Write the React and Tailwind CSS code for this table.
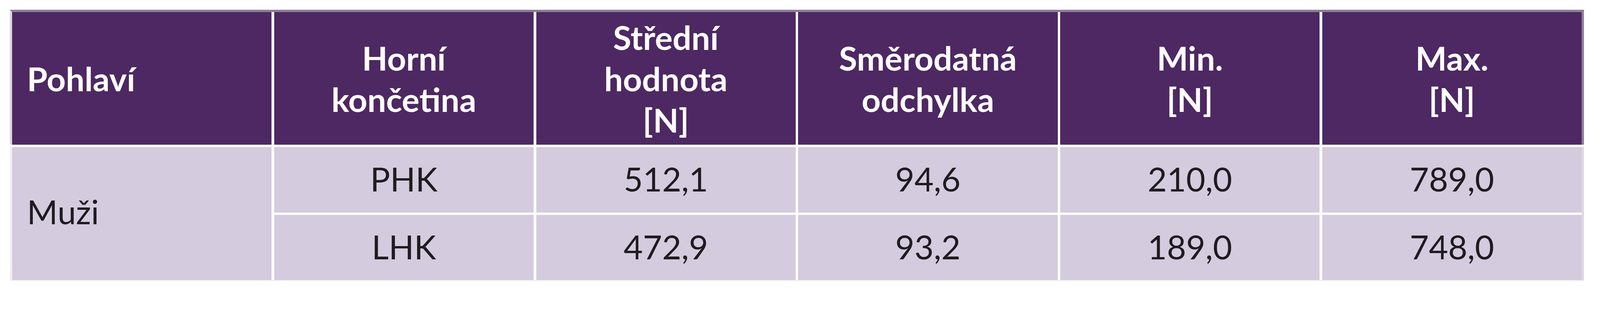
export default function App() {
  const headCell =
    "bg-[#4d2862] text-white font-bold flex items-center justify-center text-center";
  const bodyCell =
    "bg-[#d4cbde] text-[#1f1b20] flex items-center justify-center text-center pb-[5px]";
  const rows = [
    ["PHK", "512,1", "94,6", "210,0", "789,0"],
    ["LHK", "472,9", "93,2", "189,0", "748,0"],
  ];
  return (
    <div
      className="min-h-[740px] bg-white pt-[25px] pl-[25px] text-[85px] leading-[106px]"
      style={{ fontFamily: "Lato, 'Open Sans', 'Liberation Sans', sans-serif" }}
    >
      <div className="w-[4030px]">
        <div className="grid grid-cols-6 gap-x-[6.5px] h-[346px] bg-white border-t-[6px] border-t-[#8b7e99] border-l-[6px] border-l-[#dcd8e2] border-r-[6px] border-r-[#8e7f9c]">
          <div className="bg-[#4d2862] text-white font-bold flex items-center pl-[38px]">
            Pohlaví
          </div>
          <div className={headCell}>
            Horní
            <br />
            končetina
          </div>
          <div className={headCell}>
            Střední
            <br />
            hodnota
            <br />
            [N]
          </div>
          <div className={headCell}>
            Směrodatná
            <br />
            odchylka
          </div>
          <div className={headCell}>
            Min.
            <br />
            [N]
          </div>
          <div className={headCell}>
            Max.
            <br />
            [N]
          </div>
        </div>
        <div className="mt-[6px] grid grid-cols-6 grid-rows-2 gap-x-[6.5px] gap-y-[6px] h-[343px] bg-white border-l-[6px] border-l-[#f3eff5] border-r-[6px] border-r-[#e0d8e5] border-b-[2px] border-b-[#eeeaf1]">
          <div className="row-span-2 bg-[#d4cbde] text-[#1f1b20] flex items-center pl-[38px] pb-[11px]">
            Muži
          </div>
          {rows[0].map((v, i) => (
            <div key={"a" + i} className={bodyCell}>
              {v}
            </div>
          ))}
          {rows[1].map((v, i) => (
            <div key={"b" + i} className={bodyCell}>
              {v}
            </div>
          ))}
        </div>
      </div>
    </div>
  );
}
